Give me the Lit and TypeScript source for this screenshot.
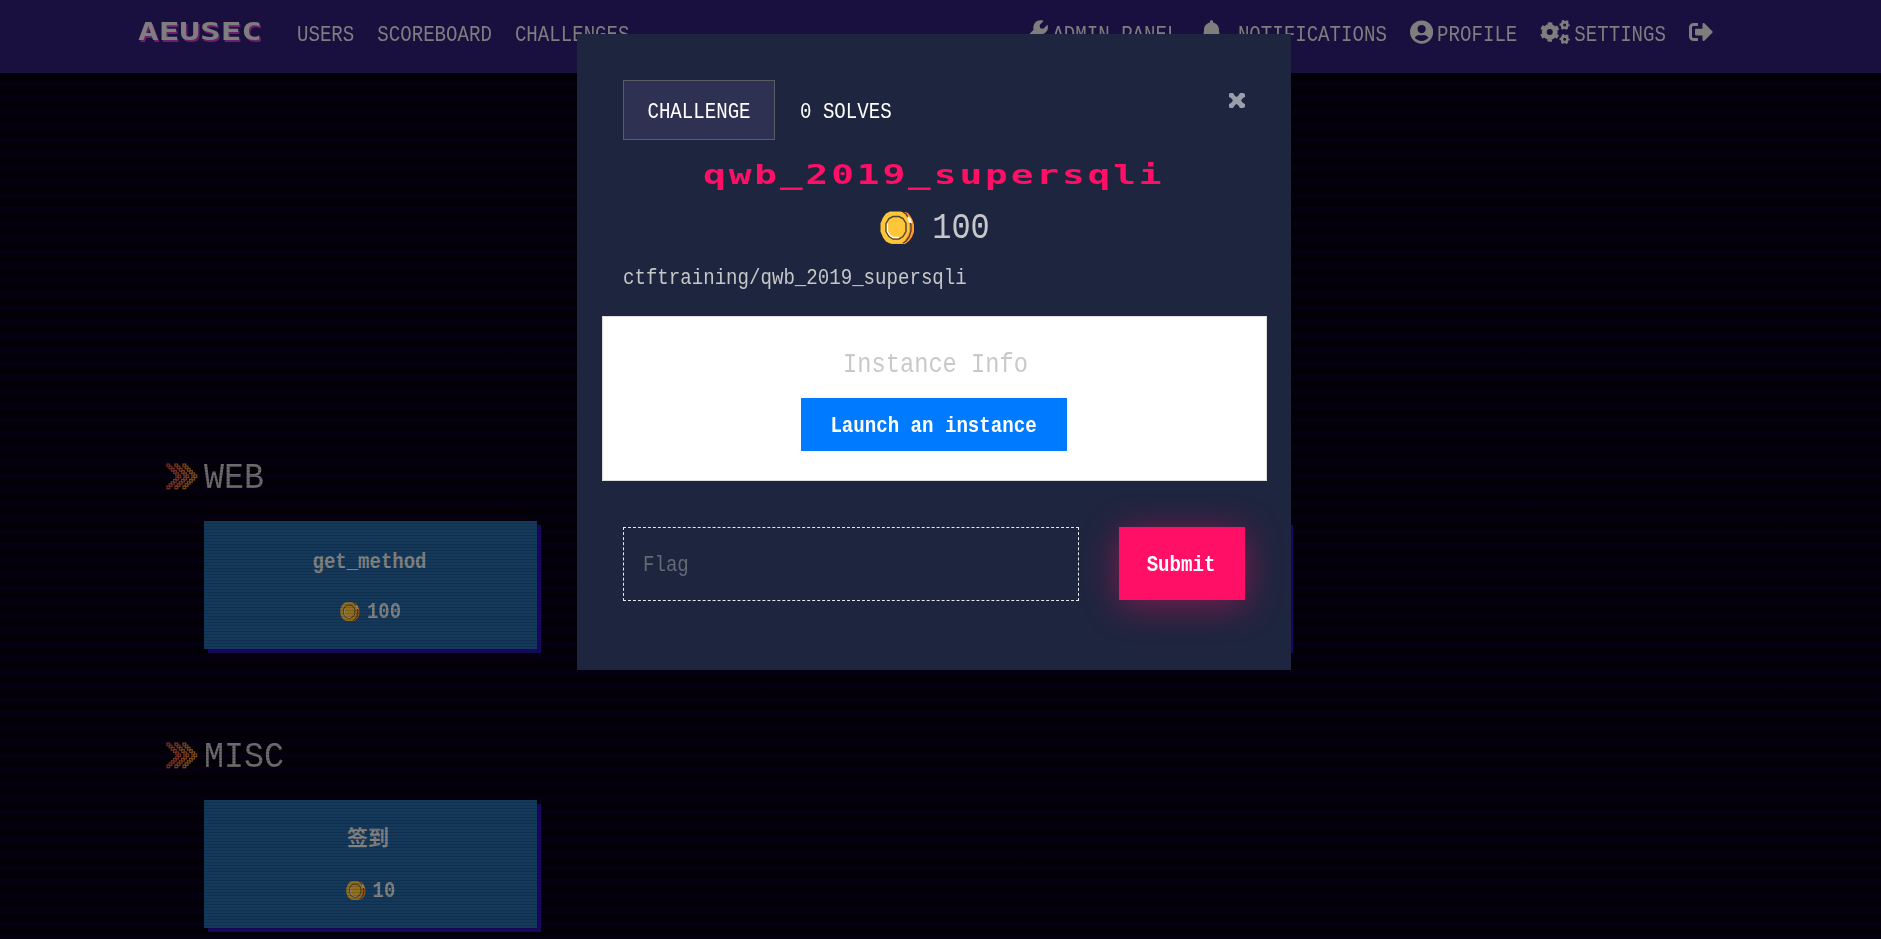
import { LitElement, html, svg, css } from "lit";
import { customElement, property } from "lit/decorators.js";

@customElement("coin-icon")
class CoinIcon extends LitElement {
  static styles = css`
    :host { display: block; }
    svg { display: block; width: 100%; height: 100%; }
  `;
  render() {
    return html`<svg viewBox="0 0 35 33">
      <path d="M11 1h14l3 1 3 4 2 4 1 4v7l-2 5-3 4-4 3H11z" fill="#ff9a2e"/>
      <path d="M23 1l3 2 3 5 2 6v6l-2 6-3 4-3 2" stroke="#4a3a33" stroke-width="1.3" fill="none"/>
      <path d="M28 5l3 3 1 4h-3l-2-4z" fill="#fff3e6"/>
      <path d="M10 0.500h11l4 3 3 5 1 5v7l-2 5-3 5-3 2H10l-4-2-3-4-2.500-6v-8l2.500-6 3-4z" fill="#ffc63a"/>
      <path d="M13 5.500h6l4 2 3 5v8l-3 5-4 2.500h-6l-4-2.500-3-5v-8l3-5z" fill="#ffc63a" stroke="#4b4333" stroke-width="1.4"/>
      <path d="M7.500 12.500v8l2.500 4 3 2h6" fill="none" stroke="#fff" stroke-width="1.300"/>
    </svg>`;
  }
}

const STEPS = [0, 1, 2, 3, 4, 5, 4, 3, 2, 1, 0];
const chevron = (x: number, color: string) =>
  STEPS.map((k, i) => svg`<rect x=${x + k * 2.2} y=${1 + i * 2.2} width="2.700" height="2.700" fill="none" stroke=${color} stroke-width="1.2"/>`);

@customElement("category-block")
class CategoryBlock extends LitElement {
  @property() label = "";
  @property() name = "";
  @property() value = "";
  static styles = css`
    :host { display: block; }
    .head { display: flex; align-items: center; height: 40px; padding-left: 166px; gap: 6px; }
    .arrows { width: 32px; height: 27px; margin-top: -2px; }
    .label { font: 33.300px/40px "Liberation Mono", monospace; color: #6c6c6c; transform: scaleY(1.13); padding-top: 2px; }
    .card { box-sizing: border-box; margin: 24px 0 0 204px; width: 333px; height: 128px; background: #14395b;
      box-shadow: 4px 4px 0 #1a0764; display: flex; flex-direction: column; align-items: center;
      color: #828282; font: bold 19px/24px "Liberation Mono", "Noto Sans CJK SC", monospace; padding-top: 28px; }
    .name { transform: translateY(1px) scaleY(1.12); padding-right: 2px; }
    .name.cjk { font-size: 21px; transform: none; padding-right: 5px; }
    .pts { display: flex; align-items: center; gap: 7px; margin-top: 26px; }
    .num { transform: scaleY(1.12); padding-top: 1px; }
    coin-icon { width: 20px; height: 19px; filter: brightness(.57); }
  `;
  render() {
    return html`
      <div class="head">
        <svg class="arrows" viewBox="0 0 32 27">${chevron(1, "#7a3022")}${chevron(9, "#7c3d1c")}${chevron(17, "#7c4a14")}</svg>
        <span class="label">${this.label}</span>
      </div>
      <div class="card">
        <span class="name ${/^[\x00-\x7f]*$/.test(this.name) ? "" : "cjk"}">${this.name}</span>
        <div class="pts"><coin-icon></coin-icon><span class="num">${this.value}</span></div>
      </div>`;
  }
}

@customElement("app-root")
class AppRoot extends LitElement {
  static styles = css`
    :host { display: block; position: relative; width: 1881px; height: 939px; overflow: hidden;
      background: repeating-linear-gradient(#060012 0, #020005 7px, #060012 14px);
      font: 19.100px/24px "Liberation Mono", monospace; }
    .nav { display: flex; box-sizing: border-box; height: 73px; background: #1a103f; color: #7e7e7e; padding: 20px 168px 0 138px; align-items: flex-start; }
    .brand { width: 159px; font: bold 24.700px/24px "DejaVu Sans Mono", monospace; text-shadow: 1px 2px #6b1f6d; }
    .brand span { display: inline-block; transform: scaleX(1.39); transform-origin: left; }
    .links { display: flex; gap: 23px; }
    .links span, .right span { display: block; transform: scaleY(1.17); line-height: 31px; }
    .right { display: flex; margin-left: auto; }
    .item { display: flex; gap: 4px; margin-left: 23px; }
    .item svg { height: 24px; fill: #7e7e7e; display: block; }
    .page { padding-top: 384px; height: 482px; }
    category-block + category-block { margin-top: 87px; }
    .scan { position: absolute; inset: 73px 0 0 0; pointer-events: none;
      background: repeating-linear-gradient(#00000028 0 1px, #0000 1px 3px); }
    .behind { position: absolute; left: 960px; top: 525px; width: 333px; height: 128px; background: #1a0764; }
    .modal { position: absolute; left: 577px; top: 34px; width: 714px; height: 636px; box-sizing: border-box; background: #1e253f; padding: 46px 24px 0; color: #c6c7c9; }
    .tabs { display: flex; margin: 0 22px; height: 60px; color: #fff; line-height: 64px; }
    .tab { box-sizing: border-box; width: 152px; height: 60px; line-height: 62px; border: 1px solid #5b5b63; background: #2e3152; text-align: center; }
    .tall { display: inline-block; transform: scaleY(1.17); }
    .solves { margin-left: 25px; }
    .x { width: 17px; height: 15px; margin: 13px 0 0 auto; fill: #9a9daa; }
    .title { height: 44px; margin-top: 13px; text-align: center; color: #ff0f65; font: bold 27px/44px "DejaVu Sans Mono", monospace; }
    .title span { display: inline-block; transform: scaleX(1.4); letter-spacing: 2.050px; }
    .score { display: flex; justify-content: center; align-items: center; height: 50px; margin-top: 5px; gap: 17px; font-size: 32px; padding-left: 2px; }
    .score .tall { padding-top: 2px; }
    .score coin-icon { width: 35px; height: 33px; }
    .desc { margin: 14px 22px 0; line-height: 24px; }
    .info { box-sizing: border-box; height: 165px; margin: 26px 0 0 1px; background: #fff; border: 1px solid #ddd; display: flex; flex-direction: column; align-items: center; padding-top: 31px; width: 665px; }
    .info h5 { margin: 0 0 0 2px; font: 23.700px/33px "Liberation Mono", monospace; color: #c9c9c9; transform: scaleY(1.2); }
    .launch { margin: 17px 2px 0 0; width: 266px; height: 53px; background: #007bff; color: #fff; font-weight: bold; line-height: 56px; text-align: center; }
    .form { display: flex; justify-content: space-between; margin: 46px 22px 0; }
    .flag { box-sizing: border-box; width: 456px; height: 74px; border: 1px dashed #e8e8ee; padding-left: 19px; line-height: 75px; color: #626a75; }
    .submit { width: 126px; height: 73px; background: #ff0f65; color: #fff; font-weight: bold; text-align: center; line-height: 77px; box-shadow: 0 5px 36px #ff0f6570; }
    .submit .tall { margin-right: 2px; }
  `;
  render() {
    return html`
      <div class="nav">
        <div class="brand"><span>AEUSEC</span></div>
        <div class="links"><span>USERS</span><span>SCOREBOARD</span><span>CHALLENGES</span></div>
        <div class="right">
          <div class="item"><svg viewBox="0 0 512 512"><path d="M507 118a12 12 0 0 0-20-6l-74 74-68-11-11-68 74-74a12 12 0 0 0-6-20C330-4 261 18 225 72c-28 42-33 92-20 137L19 395a64 64 0 1 0 98 98l186-186c90 23 233-50 204-189z"/></svg><span>ADMIN PANEL</span></div>
          <div class="item"><svg viewBox="0 0 448 512"><path d="M224 512c35 0 64-29 64-64H160c0 35 29 64 64 64zm215-150c-19-21-55-52-55-154 0-78-54-140-128-155V32a32 32 0 0 0-64 0v21C118 68 64 130 64 208c0 102-36 133-55 154-22 24-4 54 23 54h384c27 0 45-30 23-54z"/></svg><span>&nbsp;NOTIFICATIONS</span></div>
          <div class="item"><svg viewBox="0 0 496 512"><path fill-rule="evenodd" d="M248 8a248 248 0 1 0 0 496 248 248 0 0 0 0-496zm0 96a88 88 0 1 1 0 176 88 88 0 0 1 0-176zm0 344c-59 0-111-27-147-69 20-36 58-61 102-61 14 4 27 7 45 7s31-3 45-7c44 0 82 25 102 61-36 42-88 69-147 69z"/></svg><span>PROFILE</span></div>
          <div class="item"><svg viewBox="0 0 640 512">
            <circle cx="208" cy="256" r="117" fill="none" stroke="#7e7e7e" stroke-width="105"/>
            <circle cx="208" cy="256" r="180" fill="none" stroke="#7e7e7e" stroke-width="54" stroke-dasharray="94.200 94.300" stroke-dashoffset="47" transform="rotate(30 208 256)"/>
            <circle cx="526" cy="104" r="59" fill="none" stroke="#7e7e7e" stroke-width="54"/>
            <circle cx="526" cy="104" r="93" fill="none" stroke="#7e7e7e" stroke-width="34" stroke-dasharray="48.700 48.700" stroke-dashoffset="24"/>
            <circle cx="526" cy="408" r="59" fill="none" stroke="#7e7e7e" stroke-width="54"/>
            <circle cx="526" cy="408" r="93" fill="none" stroke="#7e7e7e" stroke-width="34" stroke-dasharray="48.700 48.700" stroke-dashoffset="24"/></svg><span>SETTINGS</span></div>
          <div class="item"><svg viewBox="0 0 512 512"><path d="M497 273L329 441c-15 15-41 5-41-17v-96H152c-13 0-24-11-24-24v-96c0-13 11-24 24-24h136V88c0-21 26-32 41-17l168 168c9 9 9 25 0 34zM192 436v-40c0-7-5-12-12-12H96c-18 0-32-14-32-32V160c0-18 14-32 32-32h84c7 0 12-5 12-12V76c0-7-5-12-12-12H96A96 96 0 0 0 0 160v192a96 96 0 0 0 96 96h84c7 0 12-5 12-12z"/></svg></div>
        </div>
      </div>
      <div class="page">
        <category-block label="WEB" name="get_method" value="100"></category-block>
        <category-block label="MISC" name="签到" value="10"></category-block>
      </div>
      <div class="behind"></div>
      <div class="scan"></div>
      <div class="modal">
        <div class="tabs">
          <div class="tab"><span class="tall">CHALLENGE</span></div>
          <div class="solves"><span class="tall">0 SOLVES</span></div>
          <svg class="x" viewBox="0 0 17 15"><path d="M1 1l1-1h3l2 3 1.500 1L10 3l2-3h3l2 1v3l-2 1-2 2.500 2 2.500 2 1v3l-2 1h-3l-2-3-1.500-1L7 12l-2 3H2l-1-1v-3l2-1 2-2.500L3 5 1 4z"/></svg>
        </div>
        <div class="title"><span>qwb_2019_supersqli</span></div>
        <div class="score"><coin-icon></coin-icon><span class="tall">100</span></div>
        <div class="desc"><span class="tall">ctftraining/qwb_2019_supersqli</span></div>
        <div class="info"><h5>Instance Info</h5><div class="launch"><span class="tall">Launch an instance</span></div></div>
        <div class="form"><div class="flag"><span class="tall">Flag</span></div><div class="submit"><span class="tall">Submit</span></div></div>
      </div>`;
  }
}
